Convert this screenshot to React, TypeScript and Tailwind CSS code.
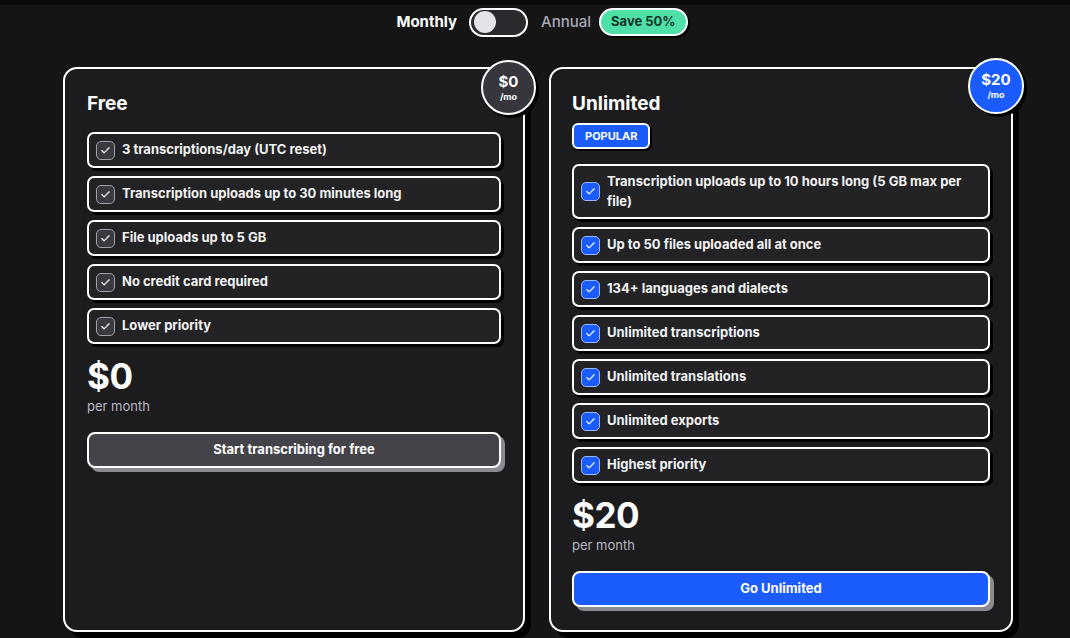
import { Check } from 'lucide-react'

const freeFeatures = [
  '3 transcriptions/day (UTC reset)',
  'Transcription uploads up to 30 minutes long',
  'File uploads up to 5 GB',
  'No credit card required',
  'Lower priority',
]

const unlimitedFeatures = [
  'Transcription uploads up to 10 hours long (5 GB max per file)',
  'Up to 50 files uploaded all at once',
  '134+ languages and dialects',
  'Unlimited transcriptions',
  'Unlimited translations',
  'Unlimited exports',
  'Highest priority',
]

function Feature({ text, blue }: { text: string; blue?: boolean }) {
  return (
    <div className="flex min-h-[36px] items-center gap-[7px] rounded-[7px] border-2 border-white bg-[#232326] px-[7px] py-[6px] shadow-[3px_3px_0_#000]">
      <div
        className={
          blue
            ? 'flex h-[19px] w-[19px] shrink-0 items-center justify-center rounded-[5px] border-[1.5px] border-[#9bb8ff] bg-[#1a5cff]'
            : 'flex h-[19px] w-[19px] shrink-0 items-center justify-center rounded-[5px] border-[1.5px] border-[#a0a0a8] bg-[#3a3a40]'
        }
      >
        <Check size={11} strokeWidth={2.5} className="text-white" />
      </div>
      <span className="text-[13px] font-bold leading-[19.5px] text-[#f2f2f2]">{text}</span>
    </div>
  )
}

export default function App() {
  return (
    <div className="h-[638px] w-full overflow-hidden bg-[#151515] font-['Inter',sans-serif] text-white">
      {/* billing toggle */}
      <div className="flex h-[39px] items-center justify-center border-t-[5px] border-[#0a0a0a] pl-[14px]">
        <span className="text-[15px] font-bold">Monthly</span>
        <div className="ml-[12px] flex h-[29px] w-[59px] items-center rounded-full border-2 border-white bg-[#2a2a2e] px-[3px]">
          <div className="h-[22px] w-[22px] rounded-full bg-[#e4e4e8]" />
        </div>
        <span className="ml-[13px] text-[15px] font-medium text-[#a8a8b8]">Annual</span>
        <span className="ml-[8px] flex h-[28px] items-center rounded-full border-2 border-white bg-[#4fe0a8] px-[10px] text-[13px] font-bold text-[#0f3526] shadow-[2px_2px_0_#000]">
          Save 50%
        </span>
      </div>

      <div className="mt-[28px] flex gap-[24px] pl-[63px]">
        {/* Free */}
        <div className="relative h-[565px] w-[462px] rounded-[14px] border-2 border-white bg-[#1c1c1f] px-[22px] pt-[23px] shadow-[6px_6px_0_#000]">
          <div className="absolute -right-[13px] -top-[9px] flex h-[55px] w-[55px] flex-col items-center justify-center rounded-full border-2 border-white bg-[#36363c] shadow-[3px_3px_0_#000]">
            <span className="text-[15px] font-bold leading-[16px]">$0</span>
            <span className="mt-[2px] text-[9px] font-bold leading-[10px]">/mo</span>
          </div>
          <h2 className="text-[19px] font-bold leading-[24px]">Free</h2>
          <div className="mt-[16px] flex flex-col gap-[8px]">
            {freeFeatures.map((f) => (
              <Feature key={f} text={f} />
            ))}
          </div>
          <div className="mt-[10px] text-[35px] font-bold leading-[44px] tracking-[-0.5px]">$0</div>
          <div className="text-[13px] leading-[16px] text-[#b8b8c0]">per month</div>
          <button className="mt-[18px] flex h-[36px] w-full items-center justify-center rounded-[8px] border-2 border-white bg-[#434349] text-[13px] font-bold shadow-[4px_4px_0_#8a8a90]">
            Start transcribing for free
          </button>
        </div>

        {/* Unlimited */}
        <div className="relative h-[565px] w-[464px] rounded-[14px] border-2 border-white bg-[#1c1c1f] px-[21px] pt-[23px] shadow-[6px_6px_0_#000]">
          <div className="absolute -right-[13px] -top-[11px] flex h-[56px] w-[56px] flex-col items-center justify-center rounded-full border-2 border-white bg-[#1a5cff] shadow-[3px_3px_0_#000]">
            <span className="text-[15px] font-bold leading-[16px]">$20</span>
            <span className="mt-[2px] text-[9px] font-bold leading-[10px]">/mo</span>
          </div>
          <h2 className="text-[19px] font-bold leading-[24px]">Unlimited</h2>
          <div className="mt-[7px] flex">
            <span className="flex h-[26px] items-center rounded-[6px] border-2 border-white bg-[#1a5cff] px-[11px] text-[11px] font-bold shadow-[2px_2px_0_#000]">
              POPULAR
            </span>
          </div>
          <div className="mt-[15px] flex flex-col gap-[8px]">
            {unlimitedFeatures.map((f) => (
              <Feature key={f} text={f} blue />
            ))}
          </div>
          <div className="mt-[10px] text-[35px] font-bold leading-[44px] tracking-[-0.5px]">$20</div>
          <div className="text-[13px] leading-[16px] text-[#b8b8c0]">per month</div>
          <button className="mt-[18px] flex h-[36px] w-full items-center justify-center rounded-[8px] border-2 border-white bg-[#1a5cff] text-[13px] font-bold shadow-[4px_4px_0_#8a8a90]">
            Go Unlimited
          </button>
        </div>
      </div>
    </div>
  )
}
